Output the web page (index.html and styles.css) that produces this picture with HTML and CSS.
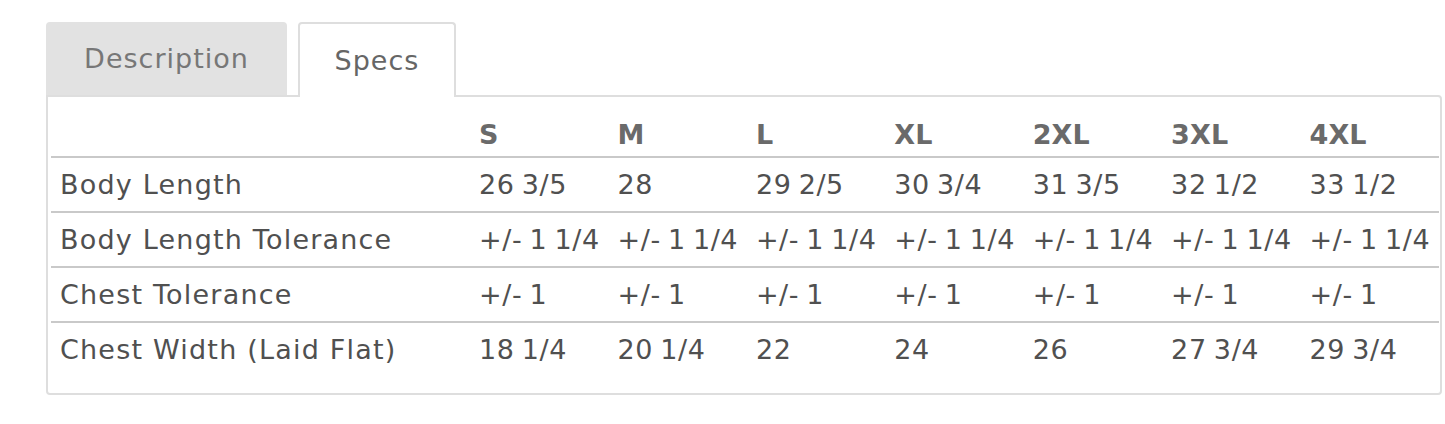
FILE: index.html
```html
<!DOCTYPE html>
<html>
<head>
<meta charset="utf-8">
<link rel="stylesheet" href="styles.css">
</head>
<body>
<div class="wrap">
  <div class="tabs">
    <div class="tab tab-inactive">Description</div>
    <div class="tab tab-active">Specs</div>
  </div>
  <div class="panel">
    <table class="specs">
      <colgroup>
        <col class="col-label">
        <col class="col-size"><col class="col-size"><col class="col-size"><col class="col-size"><col class="col-size"><col class="col-size"><col class="col-size">
      </colgroup>
      <thead>
        <tr>
          <th></th><th>S</th><th>M</th><th>L</th><th>XL</th><th>2XL</th><th>3XL</th><th>4XL</th>
        </tr>
      </thead>
      <tbody>
        <tr><td class="label">Body Length</td><td>26 3/5</td><td>28</td><td>29 2/5</td><td>30 3/4</td><td>31 3/5</td><td>32 1/2</td><td>33 1/2</td></tr>
        <tr><td class="label">Body Length Tolerance</td><td>+/- 1 1/4</td><td>+/- 1 1/4</td><td>+/- 1 1/4</td><td>+/- 1 1/4</td><td>+/- 1 1/4</td><td>+/- 1 1/4</td><td>+/- 1 1/4</td></tr>
        <tr><td class="label">Chest Tolerance</td><td>+/- 1</td><td>+/- 1</td><td>+/- 1</td><td>+/- 1</td><td>+/- 1</td><td>+/- 1</td><td>+/- 1</td></tr>
        <tr class="last"><td class="label">Chest Width (Laid Flat)</td><td>18 1/4</td><td>20 1/4</td><td>22</td><td>24</td><td>26</td><td>27 3/4</td><td>29 3/4</td></tr>
      </tbody>
    </table>
  </div>
</div>
</body>
</html>
```
FILE: styles.css
```css
html, body {
  margin: 0;
  padding: 0;
  background: #fff;
}
body {
  font-family: "DejaVu Sans", sans-serif;
  color: #555;
}
.wrap {
  padding: 22px 0 0 46px;
  width: 1396px;
}
.tabs {
  display: flex;
  gap: 11px;
  align-items: flex-end;
  position: relative;
  z-index: 1;
}
.tab {
  font-size: 27px;
  letter-spacing: 1px;
  display: flex;
  align-items: center;
  justify-content: center;
  border-radius: 4px 4px 0 0;
  box-sizing: border-box;
}
.tab-inactive {
  width: 241px;
  height: 73px;
  background: #e2e2e2;
  color: #777;
}
.tab-active {
  width: 158px;
  height: 75px;
  background: #fff;
  border: 2px solid #dedede;
  border-bottom: none;
  margin-bottom: -2px;
  color: #666;
}
.panel {
  border: 2px solid #dedede;
  border-radius: 0 4px 4px 4px;
  padding: 0 3px 18px 3px;
}
.specs {
  border-collapse: collapse;
  width: 1388px;
  table-layout: fixed;
}
.col-label { width: 419px; }
.col-size { width: 138.4px; }
.specs th {
  height: 53px;
  vertical-align: bottom;
  padding: 0 0 6px 9px;
  text-align: left;
  font-weight: bold;
  font-size: 27px;
  letter-spacing: 0.1px;
  color: #6a6a6a;
}
.specs td {
  height: 53px;
  padding: 0 0 0 9px;
  font-size: 27px;
  letter-spacing: 0.6px;
  word-spacing: -2px;
  color: #505050;
  border-top: 2px solid #c9c9c9;
  white-space: nowrap;
}
.specs tr.last td {
  height: 52px;
}
.specs td.label {
  letter-spacing: 1.2px;
  word-spacing: 0;
}
```
